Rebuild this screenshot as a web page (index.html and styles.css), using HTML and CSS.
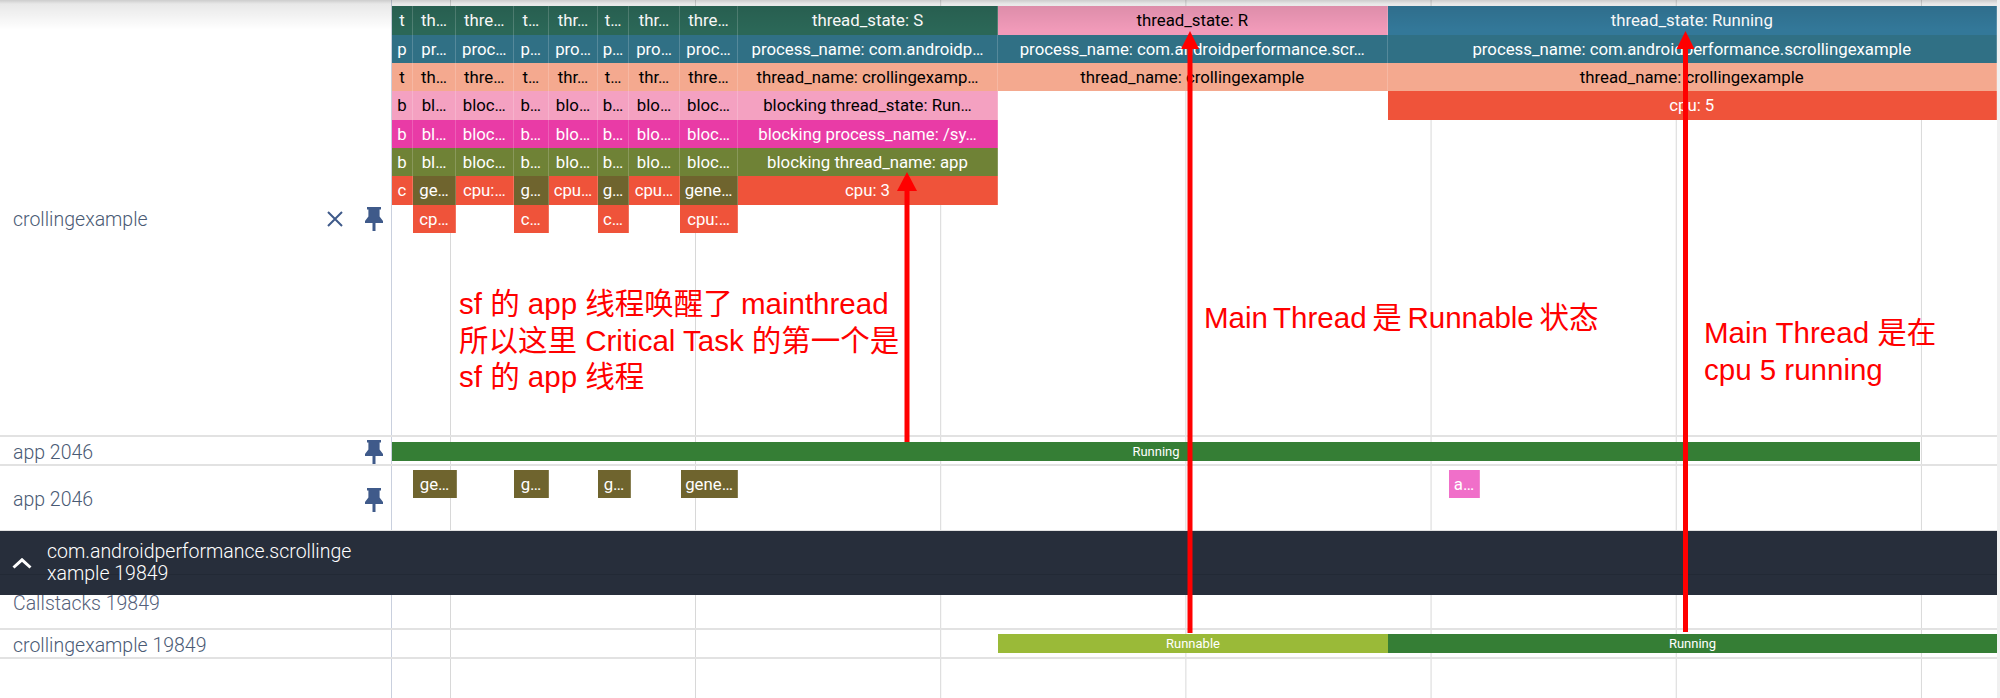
FILE: index.html
```html
<!DOCTYPE html>
<html lang="zh">
<head>
    <meta charset="UTF-8">
    <meta name="viewport" content="width=device-width, initial-scale=1.0">
    <title>Perfetto trace</title>
    <link rel="stylesheet" href="styles.css">
</head>
<body>
    <svg width="0" height="0" class="defs">
        <symbol id="pin" viewBox="0 0 18 24">
            <path d="M2 0H16V2.4H14.6V9.5L18 14V16H10.5V24H7.5V16H0V14L3.4 9.5V2.4H2Z"/>
        </symbol>
    </svg>

    <div class="tracks">
        <div class="gridlines"></div>

        <div class="track track-main">
            <div class="label">
                <span class="label-text">crollingexample</span>
                <svg class="icon-close" viewBox="0 0 16 16"><path d="M1 1L15 15M15 1L1 15"/></svg>
                <svg class="icon-pin"><use href="#pin"/></svg>
            </div>
            <div class="lane">
                <div class="slices">
                    <span class="s state-s">t</span><span class="s state-s">th…</span><span class="s state-s">thre…</span><span class="s state-s">t…</span><span class="s state-s">thr…</span><span class="s state-s">t…</span><span class="s state-s">thr…</span><span class="s state-s">thre…</span><span class="s state-s">thread_state: S</span><span class="s state-r">thread_state: R</span><span class="s state-run">thread_state: Running</span>

                    <span class="s proc">p</span><span class="s proc">pr…</span><span class="s proc">proc…</span><span class="s proc">p…</span><span class="s proc">pro…</span><span class="s proc">p…</span><span class="s proc">pro…</span><span class="s proc">proc…</span><span class="s proc">process_name: com.androidp…</span><span class="s proc">process_name: com.androidperformance.scr…</span><span class="s proc">process_name: com.androidperformance.scrollingexample</span>

                    <span class="s tname">t</span><span class="s tname">th…</span><span class="s tname">thre…</span><span class="s tname">t…</span><span class="s tname">thr…</span><span class="s tname">t…</span><span class="s tname">thr…</span><span class="s tname">thre…</span><span class="s tname">thread_name: crollingexamp…</span><span class="s tname">thread_name: crollingexample</span><span class="s tname">thread_name: crollingexample</span>

                    <span class="s bstate">b</span><span class="s bstate">bl…</span><span class="s bstate">bloc…</span><span class="s bstate">b…</span><span class="s bstate">blo…</span><span class="s bstate">b…</span><span class="s bstate">blo…</span><span class="s bstate">bloc…</span><span class="s bstate">blocking thread_state: Run…</span><span class="s cpu col-last">cpu: 5</span>

                    <span class="s bproc">b</span><span class="s bproc">bl…</span><span class="s bproc">bloc…</span><span class="s bproc">b…</span><span class="s bproc">blo…</span><span class="s bproc">b…</span><span class="s bproc">blo…</span><span class="s bproc">bloc…</span><span class="s bproc">blocking process_name: /sy…</span>

                    <span class="s bname row-start">b</span><span class="s bname">bl…</span><span class="s bname">bloc…</span><span class="s bname">b…</span><span class="s bname">blo…</span><span class="s bname">b…</span><span class="s bname">blo…</span><span class="s bname">bloc…</span><span class="s bname">blocking thread_name: app</span>

                    <span class="s cpu row-start">c</span><span class="s gen">ge…</span><span class="s cpu">cpu:…</span><span class="s gen">g…</span><span class="s cpu">cpu…</span><span class="s gen">g…</span><span class="s cpu">cpu…</span><span class="s gen">gene…</span><span class="s cpu">cpu: 3</span>

                    <span class="row-start"></span><span class="s cpu">cp…</span><span></span><span class="s cpu">c…</span><span></span><span class="s cpu">c…</span><span></span><span class="s cpu">cpu:…</span>
                </div>
            </div>
        </div>

        <div class="track track-app">
            <div class="label">
                <span class="label-text">app 2046</span>
                <svg class="icon-pin"><use href="#pin"/></svg>
            </div>
            <div class="lane lane-bar">
                <div class="bar running bar-app">Running</div>
            </div>
        </div>

        <div class="track track-app2">
            <div class="label">
                <span class="label-text">app 2046</span>
                <svg class="icon-pin"><use href="#pin"/></svg>
            </div>
            <div class="lane">
                <div class="slices slices-app">
                    <span></span><span class="s gen">ge…</span><span></span><span class="s gen">g…</span><span></span><span class="s gen">g…</span><span></span><span class="s gen">gene…</span><span></span><span class="s pink">a…</span>
                </div>
            </div>
        </div>

        <div class="group-header">
            <svg class="icon-chevron" viewBox="0 0 20 11"><path d="M1.5 9.5L10 1.8L18.5 9.5"/></svg>
            <span class="group-title">com.androidperformance.scrollingexample 19849</span>
        </div>

        <div class="track track-calls">
            <div class="label label-calls">
                <span class="label-text">Callstacks 19849</span>
            </div>
            <div class="lane"></div>
        </div>

        <div class="track track-thread">
            <div class="label">
                <span class="label-text">crollingexample 19849</span>
            </div>
            <div class="lane lane-states">
                <div class="bar runnable">Runnable</div>
                <div class="bar running bar-thread">Running</div>
            </div>
        </div>

        <div class="top-shadow"></div>
        <div class="right-edge"></div>
    </div>

    <!-- annotations on top of the screenshot -->
    <svg class="arrows" viewBox="0 0 2000 698">
        <path d="M907 442V188"/>
        <polygon points="907,172 897,191 917,191"/>
        <path d="M1190 633V46"/>
        <polygon points="1190,31 1181,49 1199,49"/>
        <path d="M1685.5 632V46"/>
        <polygon points="1685.5,31 1676.5,49 1694.5,49"/>
    </svg>
    <p class="note note-1">sf 的 app 线程唤醒了 mainthread<br>所以这里 Critical Task 的第一个是<br>sf 的 app 线程</p>
    <p class="note note-2">Main Thread 是 Runnable 状态</p>
    <p class="note note-3">Main Thread 是在<br>cpu 5 running</p>
</body>
</html>
```

FILE: styles.css
```css
html, body {
    margin: 0;
    padding: 0;
    background-color: #ffffff;
}
body {
    position: relative;
    width: 2000px;
    height: 698px;
    overflow: hidden;
    font-family: Roboto, "Noto Sans", sans-serif;
}
.defs {
    position: absolute;
}
.tracks {
    position: relative;
    height: 698px;
}

/* time grid, sits behind the slices */
.gridlines {
    position: absolute;
    top: 0;
    bottom: 0;
    left: 391px;
    width: 1606px;
    border-left: 1px solid #c9d0de;
    background-image: linear-gradient(#d8d8d8, #d8d8d8);
    background-size: 1px 100%;
    background-repeat: no-repeat;
    background-position: 58px 0;
}
.gridlines::after {
    content: "";
    position: absolute;
    top: 0;
    bottom: 0;
    left: 303px;
    right: 0;
    background-image: linear-gradient(to right, #d8d8d8 1px, transparent 1px);
    background-size: 245.2px 100%;
}

.track {
    position: relative;
    display: flex;
    width: 1997px;
    box-sizing: border-box;
    border-bottom: 2px solid #e2e2e2;
}
.track-main { height: 437px; }
.track-app { height: 29px; }
.track-app2 { height: 66px; }
.track-calls { height: 35px; }
.track-thread { height: 29px; }

.label {
    display: flex;
    align-items: center;
    flex: none;
    width: 392px;
    box-sizing: border-box;
    padding: 3px 0 0 13px;
    color: #4a5a74;
    font-size: 19.5px;
    font-weight: 300;
}
.label-text {
    flex: 1;
}
.label-calls {
    align-items: flex-start;
    padding-top: 0;
    color: #55617a;
}
.label-calls .label-text {
    margin-top: -3px;
}
.icon-close {
    width: 16px;
    height: 16px;
    margin-right: 22px;
    fill: none;
    stroke: #3f5a8a;
    stroke-width: 2;
}
.icon-pin {
    flex: none;
    width: 18px;
    height: 24px;
    margin-right: 9px;
    fill: #3f5a8a;
}

.lane {
    flex: 1;
    min-width: 0;
}
.slices {
    display: grid;
    grid-template-columns: 21px 43px 57.5px 35.5px 49px 31px 51px 58px 260px 389.5px 609.5px;
    grid-auto-rows: 28.33px;
    padding-top: 6.3px;
}
.slices-app {
    grid-template-columns: 21px 44px 57px 35px 49px 33px 50px 57px 711px 31px;
    padding-top: 4px;
}
.s {
    overflow: hidden;
    box-sizing: border-box;
    border-right: 1px solid rgba(255, 255, 255, 0.18);
    color: #ffffff;
    font-size: 16.8px;
    line-height: 28px;
    text-align: center;
    white-space: nowrap;
}
.col-last { grid-column: 11; }
.row-start { grid-column: 1; }
.state-s { background-color: #2b6757; }
.state-r { background-color: #f19ab9; color: #000000; }
.state-run { background-color: #337899; }
.proc { background-color: #307085; }
.tname { background-color: #f4a98f; color: #000000; }
.bstate { background-color: #f4a1c1; color: #000000; }
.bproc { background-color: #e93ba6; }
.bname { background-color: #6f8236; }
.cpu { background-color: #ef533a; }
.gen { background-color: #6f642e; }
.pink { background-color: #f06fc9; }

.bar {
    height: 19px;
    color: #ffffff;
    font-size: 13px;
    line-height: 19px;
    text-align: center;
}
.lane-bar {
    padding-top: 5px;
}
.bar-app {
    width: 1528px;
}
.running { background-color: #357e35; }
.runnable { background-color: #9aba38; width: 390px; }
.bar-thread { flex: 1; }
.lane-states {
    display: flex;
    align-items: flex-start;
    padding: 4px 0 0 606px;
}

.group-header {
    position: relative;
    display: flex;
    align-items: center;
    width: 1997px;
    height: 64px;
    box-sizing: border-box;
    margin-top: -1px;
    background-color: #272e3b;
    background-image: linear-gradient(#272e3b 43px, #222935 43px, #222935 44px, #272e3b 44px);
    color: #ffffff;
    font-size: 19.5px;
    font-weight: 300;
    line-height: 22px;
}
.icon-chevron {
    flex: none;
    width: 20px;
    height: 11px;
    margin: 0 15px 0 12px;
    fill: none;
    stroke: #ffffff;
    stroke-width: 3;
}
.group-title {
    width: 310px;
    word-break: break-all;
}

.top-shadow {
    position: absolute;
    top: 0;
    left: 0;
    right: 0;
    height: 30px;
    background-image: linear-gradient(rgba(0, 0, 0, 0.2), rgba(0, 0, 0, 0.09) 4px, rgba(0, 0, 0, 0));
    pointer-events: none;
}
.right-edge {
    position: absolute;
    top: 0;
    bottom: 0;
    right: 0;
    width: 3px;
    background-color: #f0f0f0;
}

/* red notes drawn on the capture */
.arrows {
    position: absolute;
    top: 0;
    left: 0;
    width: 2000px;
    height: 698px;
    fill: #ff0000;
    stroke: none;
}
.arrows path {
    fill: none;
    stroke: #ff0000;
    stroke-width: 5;
}
.note {
    position: absolute;
    margin: 0;
    color: #ff0000;
    font-family: "Liberation Sans", "Noto Sans CJK SC", sans-serif;
    font-size: 29.5px;
    line-height: 36.5px;
    white-space: nowrap;
}
.note-1 { left: 459px; top: 286px; }
.note-2 { left: 1204px; top: 300px; word-spacing: -2.5px; }
.note-3 { left: 1704px; top: 315px; }
```
